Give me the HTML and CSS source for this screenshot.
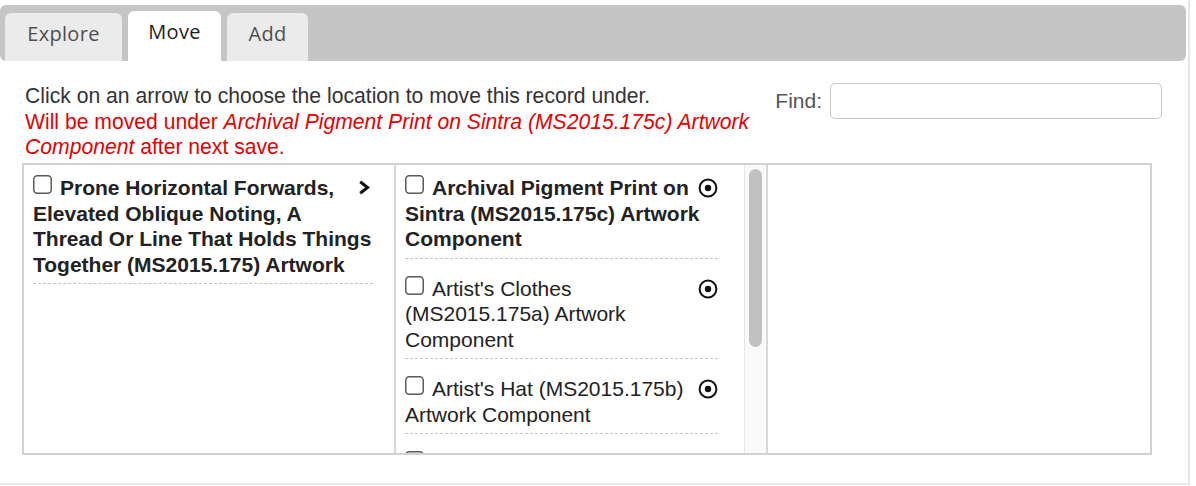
FILE: index.html
```html
<!DOCTYPE html>
<html>
<head>
<meta charset="utf-8">
<title>Move record</title>
<link rel="stylesheet" href="styles.css">
</head>
<body>
<div class="panel">
  <div class="tabbar">
    <div class="tab tab-explore">Explore</div>
    <div class="tab tab-move active">Move</div>
    <div class="tab tab-add">Add</div>
  </div>
  <div class="content">
    <div class="toolbar">
      <div class="intro">
        <div>Click on an arrow to choose the location to move this record under.</div>
        <div class="notice">Will be moved under <em>Archival Pigment Print on Sintra (MS2015.175c) Artwork Component</em> after next save.</div>
      </div>
      <label class="find"><span class="find-label">Find:</span><input class="find-input" type="text"></label>
    </div>
    <div class="columns">
      <div class="col col-first">
        <ul class="list">
          <li class="item bold">
            <svg class="chevron" width="12" height="15" viewBox="0 0 12 15"><polyline points="2.2,1.8 9.6,7.5 2.2,13.2" fill="none" stroke="#111" stroke-width="3"/></svg><svg class="check" width="19" height="19" viewBox="0 0 19 19"><rect x="0.75" y="0.75" width="17.5" height="17.5" rx="3.5" fill="#fff" stroke="#5a5a5a" stroke-width="1.5"/></svg>Prone Horizontal Forwards, Elevated Oblique Noting, A Thread Or Line That Holds Things Together (MS2015.175) Artwork
          </li>
        </ul>
      </div>
      <div class="col col-scroll">
        <div class="scroll-view">
          <ul class="list">
            <li class="item bold">
              <svg class="target" width="20" height="20" viewBox="0 0 20 20"><circle cx="10" cy="10" r="8.4" fill="none" stroke="#111" stroke-width="2"/><circle cx="10" cy="10" r="3.2" fill="#111"/></svg><svg class="check" width="19" height="19" viewBox="0 0 19 19"><rect x="0.75" y="0.75" width="17.5" height="17.5" rx="3.5" fill="#fff" stroke="#5a5a5a" stroke-width="1.5"/></svg>Archival Pigment Print on Sintra (MS2015.175c) Artwork Component
            </li>
            <li class="item">
              <svg class="target" width="20" height="20" viewBox="0 0 20 20"><circle cx="10" cy="10" r="8.4" fill="none" stroke="#111" stroke-width="2"/><circle cx="10" cy="10" r="3.2" fill="#111"/></svg><svg class="check" width="19" height="19" viewBox="0 0 19 19"><rect x="0.75" y="0.75" width="17.5" height="17.5" rx="3.5" fill="#fff" stroke="#5a5a5a" stroke-width="1.5"/></svg>Artist's Clothes (MS2015.175a) Artwork Component
            </li>
            <li class="item">
              <svg class="target" width="20" height="20" viewBox="0 0 20 20"><circle cx="10" cy="10" r="8.4" fill="none" stroke="#111" stroke-width="2"/><circle cx="10" cy="10" r="3.2" fill="#111"/></svg><svg class="check" width="19" height="19" viewBox="0 0 19 19"><rect x="0.75" y="0.75" width="17.5" height="17.5" rx="3.5" fill="#fff" stroke="#5a5a5a" stroke-width="1.5"/></svg>Artist's Hat (MS2015.175b) Artwork Component
            </li>
            <li class="item">
              <svg class="target" width="20" height="20" viewBox="0 0 20 20"><circle cx="10" cy="10" r="8.4" fill="none" stroke="#111" stroke-width="2"/><circle cx="10" cy="10" r="3.2" fill="#111"/></svg><svg class="check" width="19" height="19" viewBox="0 0 19 19"><rect x="0.75" y="0.75" width="17.5" height="17.5" rx="3.5" fill="#fff" stroke="#5a5a5a" stroke-width="1.5"/></svg>Artist's Shoes (MS2015.175d) Artwork Component
            </li>
          </ul>
        </div>
        <div class="scrollbar"><div class="thumb"></div></div>
      </div>
      <div class="col col-last"></div>
    </div>
  </div>
</div>
</body>
</html>
```

FILE: styles.css
```css
html, body {
  margin: 0;
  padding: 0;
  background: #fff;
}

body {
  font-family: "Liberation Sans", Arial, Helvetica, sans-serif;
  font-size: 21px;
  line-height: 25.5px;
  color: #333;
}

.panel {
  width: 1190px;
  box-sizing: border-box;
  padding: 5px 2px 0 0;
  border-right: 2px solid #e6e6e6;
  border-bottom: 2px solid #ececec;
}

.tabbar {
  display: flex;
  align-items: flex-end;
  gap: 6px;
  height: 56px;
  box-sizing: border-box;
  padding-left: 5px;
  background: #c5c5c5;
  border-radius: 6px;
}

.tab {
  box-sizing: border-box;
  height: 48px;
  padding-top: 7px;
  text-align: center;
  font-family: "Open Sans", "Noto Sans", sans-serif;
  font-size: 20px;
  line-height: 28px;
  letter-spacing: 0.3px;
  color: #4f4f4f;
  background: #ebebeb;
  border-radius: 6px 6px 0 0;
}

.tab.active {
  height: 50px;
  background: #fff;
  color: #1e1e1e;
}

.tab-explore { width: 117px; }
.tab-move { width: 93px; }
.tab-add { width: 81px; }

.content {
  padding: 22px 24px 28px 22px;
}

.toolbar {
  display: flex;
  justify-content: space-between;
  align-items: flex-start;
}

.intro {
  width: 735px;
  padding-left: 3px;
  font-size: 21.15px;
}

.notice {
  color: #e60000;
}

.find {
  display: flex;
  align-items: center;
  gap: 8px;
}

.find-label {
  color: #555;
}

.find-input {
  width: 332px;
  height: 36px;
  box-sizing: border-box;
  border: 1px solid #c8c8c8;
  border-radius: 5px;
  background: #fff;
  margin: 0;
  padding: 0 8px;
  font: inherit;
}

.columns {
  display: grid;
  grid-template-columns: 372px 372px 1fr;
  height: 292px;
  box-sizing: border-box;
  margin: 3.5px 10px 0 0;
  border: 2px solid #d2d2d2;
}

.col {
  box-sizing: border-box;
  min-height: 0;
  color: #222;
}

.col-first {
  padding: 0 21px 0 9px;
  border-right: 2px solid #d8d8d8;
}

.col-scroll {
  display: flex;
  border-right: 2px solid #d8d8d8;
  overflow: hidden;
}

.scroll-view {
  flex: 1;
  min-width: 0;
  overflow: hidden;
  padding: 0 26px 0 9px;
}

.scrollbar {
  flex: 0 0 22px;
  box-sizing: border-box;
  padding: 4px 4px 0 4px;
  background: #fafafa;
  border-left: 1px solid #e6e6e6;
}

.thumb {
  height: 178px;
  background: #c1c1c1;
  border-radius: 7px;
}

.list {
  list-style: none;
  margin: 0;
  padding: 10px 0 0 0;
}

.item {
  padding-bottom: 6px;
  margin-bottom: 17px;
  border-bottom: 1px dashed #c4c4c4;
}

.item.bold {
  font-weight: bold;
}

.check {
  display: inline-block;
  vertical-align: 1px;
  margin-right: 8px;
}

.chevron {
  float: right;
  margin: 5px 3px 0 6px;
}

.target {
  float: right;
  margin: 3px 0 0 6px;
}
```
